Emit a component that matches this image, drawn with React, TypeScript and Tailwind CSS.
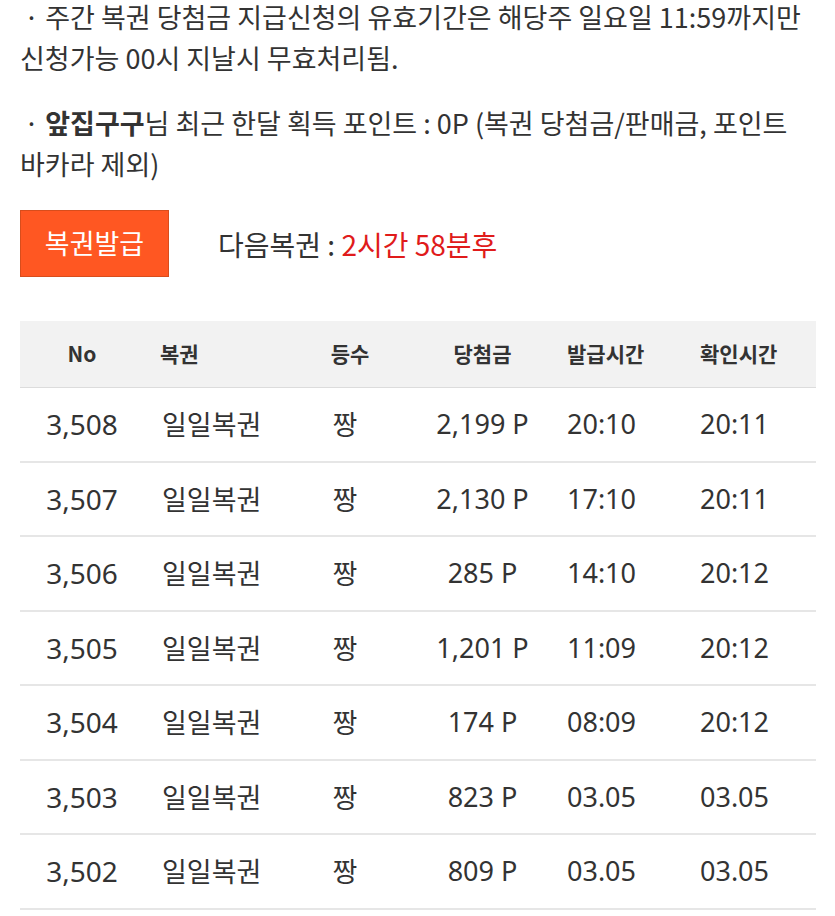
import React from 'react';

const rows = [
  { no: '3,508', amount: '2,199 P', issued: '20:10', checked: '20:11' },
  { no: '3,507', amount: '2,130 P', issued: '17:10', checked: '20:11' },
  { no: '3,506', amount: '285 P', issued: '14:10', checked: '20:12' },
  { no: '3,505', amount: '1,201 P', issued: '11:09', checked: '20:12' },
  { no: '3,504', amount: '174 P', issued: '08:09', checked: '20:12' },
  { no: '3,503', amount: '823 P', issued: '03.05', checked: '03.05' },
  { no: '3,502', amount: '809 P', issued: '03.05', checked: '03.05' },
];

const cols = 'grid grid-cols-[124px_156px_100px_165px_133px_118px] items-center';

const App = () => {
  return (
    <div className="w-[835px] h-[916px] overflow-hidden bg-white text-[#333] font-['Noto_Sans_CJK_KR',sans-serif]">
      <div className="px-[20px] -mt-[4px]">
        {/* notices */}
        <p className="text-[27px] leading-[41px] whitespace-nowrap">
          <span className="pl-[4px]">· 주간 복권 당첨금 지급신청의 유효기간은 해당주 일요일 11:59까지만</span>
          <br />
          신청가능 00시 지날시 무효처리됨.
        </p>
        <p className="mt-[24px] text-[27px] leading-[41px] whitespace-nowrap">
          <span className="pl-[4px]">· </span>
          <b className="font-bold">앞집구구</b>님 최근 한달 획득 포인트 : 0P (복권 당첨금/판매금, 포인트
          <br />
          바카라 제외)
        </p>

        {/* issue button */}
        <div className="mt-[26px] flex items-center">
          <button className="w-[149px] h-[67px] bg-[#ff5722] border border-[#d84d1c] text-white text-[27px]">
            복권발급
          </button>
          <div className="ml-[49px] text-[28px]">
            다음복권 : <span className="text-[#e01b1b]">2시간 58분후</span>
          </div>
        </div>

        {/* history table */}
        <div className="mt-[44px] w-[796px]">
          <div className={`${cols} h-[67px] bg-[#f2f2f2] border-b border-[#dcdcdc] text-[21px] font-bold text-[#333]`}>
            <div className="text-center">No</div>
            <div className="pl-[16px]">복권</div>
            <div className="text-center">등수</div>
            <div className="text-center">당첨금</div>
            <div className="pl-[2px]">발급시간</div>
            <div className="pl-[2px]">확인시간</div>
          </div>
          {rows.map((r) => (
            <div
              key={r.no}
              className={`${cols} h-[74.5px] border-b-2 border-[#e6e6e6] text-[27px] font-['Noto_Sans','Noto_Sans_CJK_KR',sans-serif]`}
            >
              <div className="text-center text-[28px]">{r.no}</div>
              <div className="pl-[18px] font-['Noto_Sans_CJK_KR',sans-serif] text-[27px]">일일복권</div>
              <div className="text-center font-['Noto_Sans_CJK_KR',sans-serif] text-[27px] pr-[10px]">짱</div>
              <div className="text-center">{r.amount}</div>
              <div className="pl-[2px]">{r.issued}</div>
              <div className="pl-[2px]">{r.checked}</div>
            </div>
          ))}
        </div>
      </div>
    </div>
  );
};

export default App;
